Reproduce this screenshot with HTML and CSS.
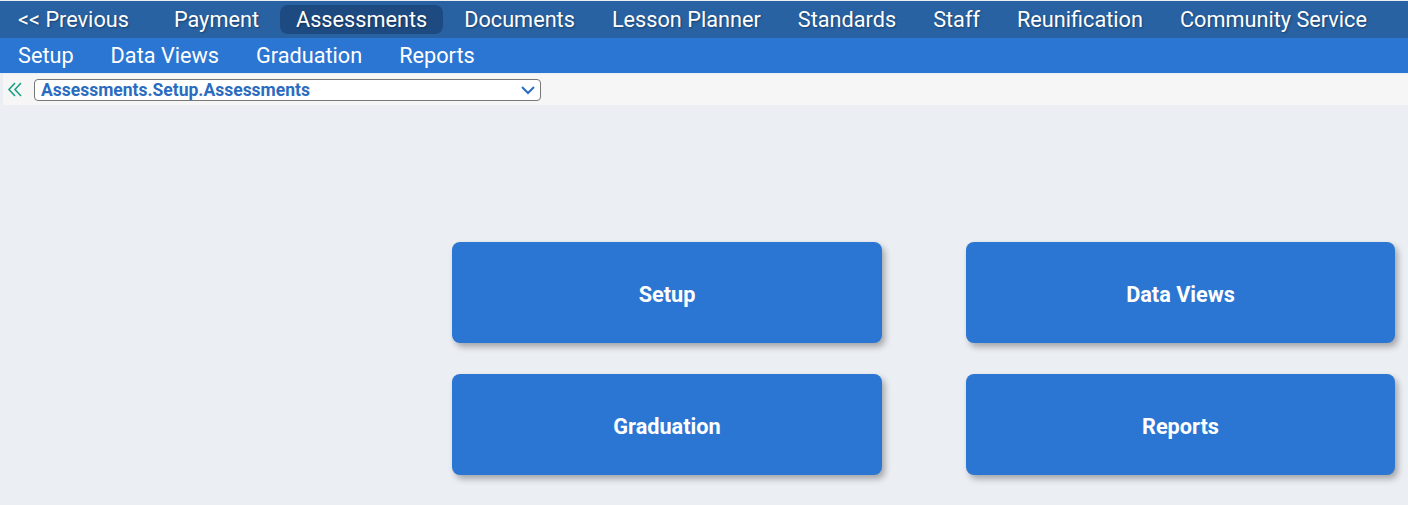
FILE: index.html
```html
<!DOCTYPE html>
<html lang="en">
<head>
    <meta charset="UTF-8">
    <title>Assessments</title>
    <link rel="stylesheet" href="styles.css">
</head>
<body>
<div class="topnav">
    <a class="nav-item nav-prev">&lt;&lt; Previous</a>
    <a class="nav-item">Payment</a>
    <a class="nav-item active">Assessments</a>
    <a class="nav-item">Documents</a>
    <a class="nav-item">Lesson Planner</a>
    <a class="nav-item">Standards</a>
    <a class="nav-item">Staff</a>
    <a class="nav-item">Reunification</a>
    <a class="nav-item">Community Service</a>
</div>
<div class="subnav">
    <a class="sub-item">Setup</a>
    <a class="sub-item">Data Views</a>
    <a class="sub-item">Graduation</a>
    <a class="sub-item">Reports</a>
</div>
<div class="crumb">
    <span class="crumb-back">
        <svg width="16" height="15" viewBox="0 0 16 15"><path d="M8 1 L2 7.5 L8 14 M14 1 L8 7.5 L14 14" fill="none" stroke="#1aa084" stroke-width="1.6"/></svg>
    </span>
    <div class="crumb-select">
        <span>Assessments.Setup.Assessments</span>
        <svg width="14" height="10" viewBox="0 0 14 10"><path d="M1 2 L7 8 L13 2" fill="none" stroke="#2b6cc0" stroke-width="2"/></svg>
    </div>
</div>
<div class="content">
    <div class="tiles">
        <div class="tile">Setup</div>
        <div class="tile">Data Views</div>
        <div class="tile">Graduation</div>
        <div class="tile">Reports</div>
    </div>
</div>
</body>
</html>
```

FILE: styles.css
```css
html{
    height: 100%;
}
body{
    height: 100%;
    margin: 0;
    padding: 0;
    background-color: #ebeef3;
    font-family: Roboto, "Liberation Sans", sans-serif;
}
.topnav{
    display: flex;
    align-items: center;
    height: 37px;
    margin-top: 1px;
    padding-left: 2px;
    background-color: #2862a3;
}
.nav-item{
    padding: 0 16px;
    margin-right: 5px;
    height: 29px;
    line-height: 30px;
    font-size: 21.7px;
    color: #fff;
    text-shadow: 1px 1px 2px rgba(0,0,0,0.35);
    border-radius: 8px;
    white-space: nowrap;
    cursor: pointer;
}
.nav-prev{
    margin-right: 13px;
}
.active{
    background-color: #1d4a80;
}
.subnav{
    display: flex;
    align-items: center;
    height: 35px;
    padding-left: 18px;
    background-color: #2b76d2;
}
.sub-item{
    margin-right: 37px;
    font-size: 21.7px;
    color: #fff;
    cursor: pointer;
}
.crumb{
    display: flex;
    align-items: center;
    height: 31px;
    margin-top: 1px;
    margin-left: 3px;
    background-color: #f6f6f6;
}
.crumb-back{
    display: flex;
    width: 31px;
    padding-left: 4px;
    box-sizing: border-box;
}
.crumb-select{
    display: flex;
    align-items: center;
    justify-content: space-between;
    box-sizing: border-box;
    width: 507px;
    height: 22px;
    padding: 0 5px 0 6px;
    background-color: #fff;
    border: 1px solid #777;
    border-radius: 4px;
    font-size: 17.5px;
    font-weight: 700;
    color: #2b6cc0;
}
.content{
    padding: 137px 13px 0 452px;
}
.tiles{
    display: grid;
    grid-template-columns: 430px 429px;
    column-gap: 84px;
    row-gap: 31px;
}
.tile{
    display: flex;
    align-items: center;
    justify-content: center;
    box-sizing: border-box;
    height: 101px;
    padding-top: 3px;
    background-color: #2b76d2;
    border-radius: 8px;
    box-shadow: 3px 4px 6px rgba(0,0,0,0.3);
    font-size: 21.7px;
    font-weight: 700;
    color: #fff;
    cursor: pointer;
}
```
